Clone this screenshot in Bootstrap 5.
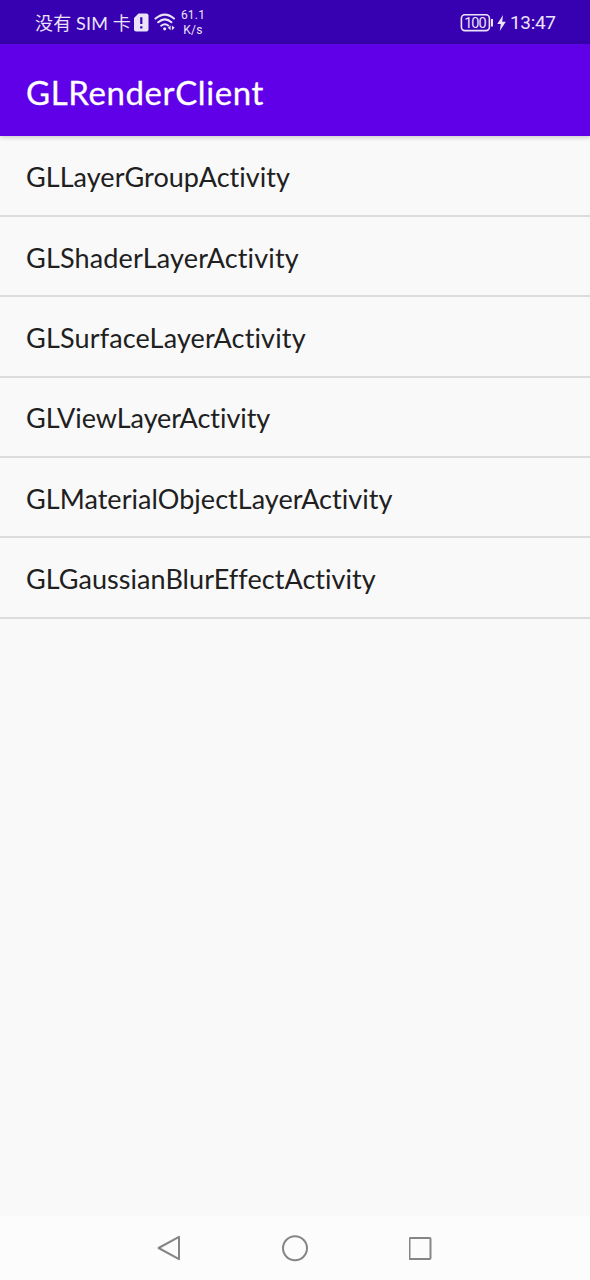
<!DOCTYPE html>
<html lang="zh-CN">
<head>
<meta charset="utf-8">
<meta name="viewport" content="width=device-width, initial-scale=1">
<title>GLRenderClient</title>
<link href="https://cdn.jsdelivr.net/npm/bootstrap@5.3.0/dist/css/bootstrap.min.css" rel="stylesheet">
<style>
body{background:#f9f9f9;font-family:Lato,"Noto Sans CJK SC",sans-serif;color:#202020;overflow:hidden}
.status-bar{height:44px;background:#3700b0;color:#ebe3fa;font-size:18px;line-height:22px;padding:1px 34px 0 35px}
.status-bar svg,.nav-keys svg{display:block;flex:none}
.sim-text{width:98px;letter-spacing:.15px}
.rate{font-family:Roboto,sans-serif;font-size:12px;line-height:15px;width:26px;margin-left:4px;padding-top:1px;letter-spacing:.2px}
.battery{width:33px;height:18px}
.clock{font-family:Roboto,"Noto Sans",sans-serif;font-size:19px;width:46px;letter-spacing:-.35px}
.app-bar{height:92px;background:#6000e8;padding:3px 26px 0;box-shadow:0 1px 5px rgba(0,0,0,.22);z-index:1}
.app-title{font-size:33px;line-height:40px;font-weight:400;color:#fff;letter-spacing:.6px;-webkit-text-stroke:.3px #fff}
.activity-list{padding-top:.7px}
.activity{height:80.33px;padding:3px 26px 0;border-bottom:2px solid #dcdcdc;font-size:27px;line-height:34px;font-variant-ligatures:none}
.track-a{letter-spacing:.05px}
.track-b{letter-spacing:.16px}
.track-c{letter-spacing:-.05px}
.nav-keys{height:64px;background:#fcfcfc;gap:100px}
</style>
</head>
<body>
<div class="d-flex flex-column vh-100">
<header class="status-bar d-flex align-items-center text-nowrap">
<span class="sim-text">没有 SIM 卡</span>
<svg width="16" height="20" viewBox="0 0 16 20"><path d="M5.5 .5H13.5Q15.5 .5 15.5 2.5V16.5Q15.5 18.5 13.5 18.5H3Q1 18.5 1 16.5V5Z" fill="#ebe3fa"/><path d="M8.3 4.3V11M8.3 13.2V15.5" stroke="#3700b0" stroke-width="2.2"/></svg>
<svg class="ms-1" width="23" height="20" viewBox="0 0 23 20" fill="none" stroke="#ebe3fa" stroke-width="2" stroke-linecap="round"><path d="M2.5 5.6Q12 -2.4 21 5.6M5.2 9.3Q12 3.5 18.4 9.3M8.2 12.7Q12 9.7 15.4 12.7"/><circle cx="11.7" cy="15.8" r="1.6" fill="#ebe3fa" stroke="none"/><path d="M17.6 12.4V17.2L14.8 14.8ZM18.9 12.4V17.2L21.7 14.8Z" fill="#ebe3fa" stroke="#3700b0" stroke-width=".5" paint-order="stroke"/></svg>
<span class="rate text-center"><span class="d-block">61.1</span><span class="d-block">K/s</span></span>
<svg class="battery ms-auto" viewBox="0 0 33 18"><rect x="1.4" y=".8" width="28" height="15.8" rx="3.5" fill="none" stroke="#ebe3fa" stroke-width="1.6"/><path d="M32 5V12.5" stroke="#ebe3fa" stroke-width="2"/><text x="15.4" y="13.8" text-anchor="middle" textLength="22.5" font-family="Roboto" font-size="14.5" fill="#ebe3fa">100</text></svg>
<svg class="ms-1" width="9" height="16" viewBox="0 0 9 16"><path d="M6 0L.3 9H3.8L2.8 16L8.8 6.7H5.2Z" fill="#ebe3fa"/></svg>
<span class="clock ms-1">13:47</span>
</header>
<div class="app-bar d-flex align-items-center position-relative"><h1 class="app-title m-0">GLRenderClient</h1></div>
<main class="activity-list flex-grow-1">
<div class="activity d-flex align-items-center"><span class="track-a">GLLayerGroupActivity</span></div>
<div class="activity d-flex align-items-center"><span class="track-b">GLShaderLayerActivity</span></div>
<div class="activity d-flex align-items-center"><span class="track-b">GLSurfaceLayerActivity</span></div>
<div class="activity d-flex align-items-center"><span class="track-c">GLViewLayerActivity</span></div>
<div class="activity d-flex align-items-center"><span class="track-a">GLMaterialObjectLayerActivity</span></div>
<div class="activity d-flex align-items-center"><span class="track-a">GLGaussianBlurEffectActivity</span></div>
</main>
<nav class="nav-keys d-flex align-items-center justify-content-center">
<svg width="24" height="28" viewBox="0 0 24 28"><path d="M22 2.8V25.2L1.6 14Z" fill="none" stroke="#858585" stroke-width="2" stroke-linejoin="round"/></svg>
<svg width="28" height="28" viewBox="0 0 28 28"><circle cx="14" cy="14.3" r="12" fill="none" stroke="#858585" stroke-width="2"/></svg>
<svg width="24" height="28" viewBox="0 0 24 28"><rect x=".5" y="4" width="21" height="21" rx="1" fill="none" stroke="#858585" stroke-width="2"/></svg>
</nav>
</div>
<script src="https://cdn.jsdelivr.net/npm/bootstrap@5.3.0/dist/js/bootstrap.bundle.min.js"></script>
</body>
</html>
